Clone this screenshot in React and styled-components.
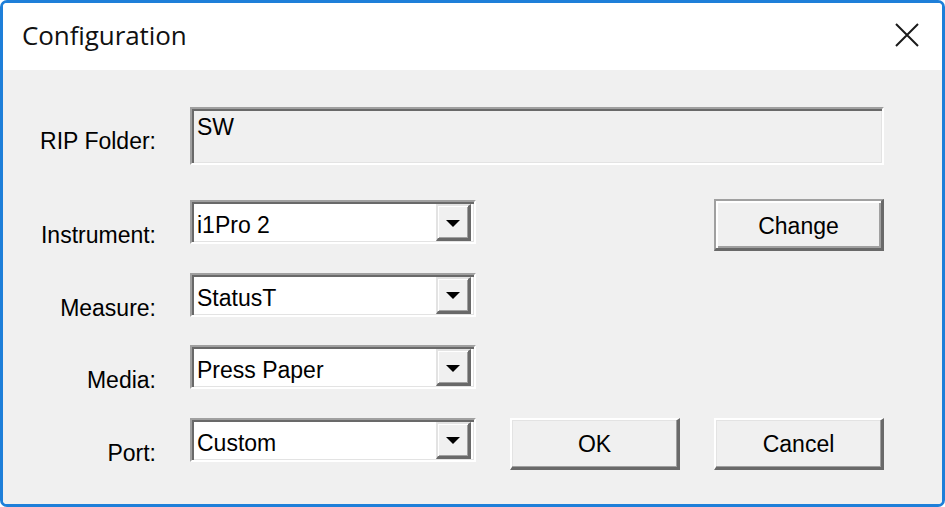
import React from 'react'
import styled, { createGlobalStyle } from 'styled-components'

const GlobalStyle = createGlobalStyle`
  html, body {
    margin: 0;
    padding: 0;
    background: #ffffff;
  }
  * {
    box-sizing: border-box;
  }
`

const Window = styled.div`
  width: 945px;
  height: 507px;
  display: flex;
  flex-direction: column;
  border: 3px solid #1e7fd9;
  border-radius: 7px;
  overflow: hidden;
  background: #ffffff;
`

const TitleBar = styled.div`
  height: 67px;
  display: flex;
  align-items: center;
  justify-content: space-between;
  padding: 0 22px 4px 19px;
  background: #ffffff;
`

const Title = styled.span`
  font-family: 'Open Sans', 'Noto Sans', sans-serif;
  font-size: 26px;
  color: #111111;
  letter-spacing: -0.1px;
`

const CloseButton = styled.div`
  width: 26px;
  height: 26px;
  display: flex;
  align-items: center;
  justify-content: center;
`

const Body = styled.div`
  flex: 1;
  background: #f0f0f0;
  padding-top: 37px;
  display: grid;
  grid-template-columns: 153px 286px 170px 170px;
  grid-template-rows: 64.5px 44px 44px 44px 44px;
  column-gap: 34px;
  row-gap: 28.5px;
  font-family: 'Liberation Sans', Arial, sans-serif;
  font-size: 23px;
  color: #000000;
  align-content: start;
`

const Label = styled.div`
  grid-column: 1;
  justify-self: end;
  line-height: 26px;
  align-self: ${(p) => (p.$top ? 'start' : 'end')};
  margin-top: ${(p) => (p.$top ? '21px' : '0')};
  margin-bottom: ${(p) => (p.$top ? '0' : '-4px')};
`

const FolderField = styled.div`
  grid-column: 2 / 5;
  height: 58px;
  align-self: start;
  background: #f0f0f0;
  border-top: 2px solid #a0a0a0;
  border-left: 2px solid #a0a0a0;
  border-bottom: 2px solid #ffffff;
  border-right: 2px solid #ffffff;
  box-shadow: inset 2px 2px 0 #696969, inset -1px -1px 0 #e3e3e3;
  padding: 5px 0 0 5px;
  line-height: 26px;
`

const Combo = styled.div`
  grid-column: 2;
  height: 44px;
  display: flex;
  align-items: center;
  background: #ffffff;
  border-top: 2px solid #a0a0a0;
  border-left: 2px solid #a0a0a0;
  border-bottom: 2px solid #ffffff;
  border-right: 2px solid #ffffff;
  box-shadow: inset 2px 2px 0 #696969, inset -1px -1px 0 #e3e3e3;
  padding: 0 3px 0 5px;
`

const ComboText = styled.span`
  flex: 1;
  line-height: 26px;
  padding-top: 6px;
`

const DropButton = styled.div`
  width: 35px;
  height: 37px;
  margin-top: 1px;
  display: flex;
  align-items: center;
  justify-content: center;
  background: #f0f0f0;
  border-top: 2px solid #e3e3e3;
  border-left: 2px solid #e3e3e3;
  border-bottom: 3px solid #696969;
  border-right: 3px solid #696969;
  box-shadow: inset 1px 1px 0 #ffffff, inset -1px -1px 0 #a0a0a0;
`

const Arrow = styled.div`
  width: 0;
  height: 0;
  border-left: 7px solid transparent;
  border-right: 7px solid transparent;
  border-top: 7px solid #000000;
  margin-top: 2px;
`

const Button = styled.div`
  grid-column: ${(p) => p.$col};
  height: 52px;
  margin-top: ${(p) => (p.$default ? '-1px' : '0')};
  display: flex;
  align-items: center;
  justify-content: center;
  background: #f0f0f0;
  border-top: 2px solid ${(p) => (p.$default ? '#a0a0a0' : '#ffffff')};
  border-left: 2px solid ${(p) => (p.$default ? '#a0a0a0' : '#ffffff')};
  border-bottom: 3px solid #696969;
  border-right: 3px solid #696969;
  box-shadow: ${(p) =>
    p.$default
      ? 'inset 2px 2px 0 #ffffff, inset -2px -2px 0 #a0a0a0'
      : 'inset -1px -1px 0 #a0a0a0, inset 1px 1px 0 #e3e3e3'};
  line-height: 26px;
  padding-top: 2px;
`

const ComboBox = ({ value }) => (
  <Combo>
    <ComboText>{value}</ComboText>
    <DropButton>
      <Arrow />
    </DropButton>
  </Combo>
)

const App = () => {
  return (
    <>
      <GlobalStyle />
      <Window>
        <TitleBar>
          <Title>Configuration</Title>
          <CloseButton>
            <svg width="26" height="26" viewBox="0 0 26 26">
              <path d="M2 2 L24 24 M24 2 L2 24" stroke="#1a1a1a" strokeWidth="2" fill="none" />
            </svg>
          </CloseButton>
        </TitleBar>
        <Body>
          <Label $top>RIP Folder:</Label>
          <FolderField>SW</FolderField>

          <Label>Instrument:</Label>
          <ComboBox value="i1Pro 2" />
          <Button $col={4} $default>
            Change
          </Button>

          <Label>Measure:</Label>
          <ComboBox value="StatusT" />

          <Label>Media:</Label>
          <ComboBox value="Press Paper" />

          <Label>Port:</Label>
          <ComboBox value="Custom" />
          <Button $col={3}>OK</Button>
          <Button $col={4}>Cancel</Button>
        </Body>
      </Window>
    </>
  )
}

export default App
